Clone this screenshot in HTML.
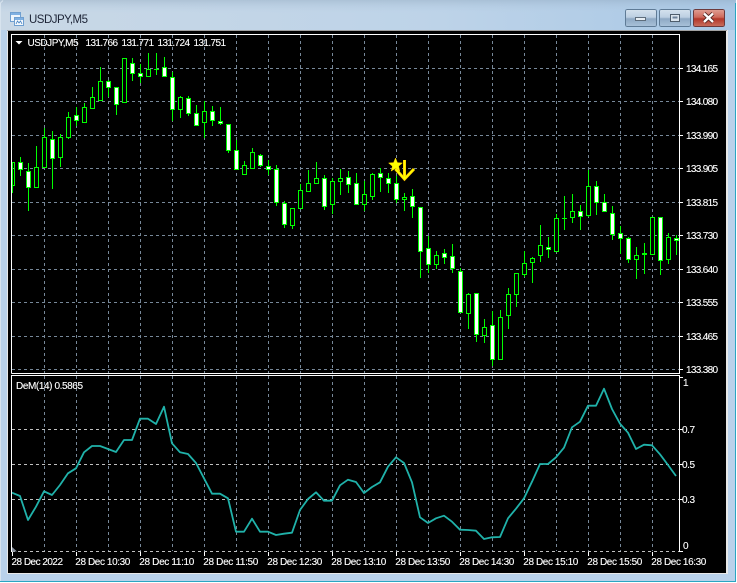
<!DOCTYPE html>
<html><head><meta charset="utf-8"><title>USDJPY,M5</title>
<style>
html,body{margin:0;padding:0;background:#fff}
body{width:737px;height:583px;overflow:hidden;position:relative}
svg{position:absolute;left:0;top:0;display:block}
text{font-family:"Liberation Sans",sans-serif;font-size:10px;fill:#fff;stroke:#fff;stroke-width:.12}
</style></head><body>
<svg width="737" height="583" viewBox="0 0 737 583" xmlns="http://www.w3.org/2000/svg">
<defs>
<linearGradient id="tb" x1="0" y1="0" x2="1" y2="0"><stop offset="0" stop-color="#c9d8e6"/><stop offset=".6" stop-color="#bdd3e8"/><stop offset="1" stop-color="#a9c8e6"/></linearGradient>
<linearGradient id="tv" x1="0" y1="0" x2="0" y2="1"><stop offset="0" stop-color="#8ea6bc" stop-opacity=".4"/><stop offset=".45" stop-color="#b9d1ea" stop-opacity="0"/></linearGradient>
<linearGradient id="bb" x1="0" y1="0" x2="0" y2="1"><stop offset="0" stop-color="#d5e2ee"/><stop offset=".45" stop-color="#bccfe2"/><stop offset=".55" stop-color="#8fa9c4"/><stop offset="1" stop-color="#a9c2da"/></linearGradient>
<linearGradient id="bc" x1="0" y1="0" x2="0" y2="1"><stop offset="0" stop-color="#e0a094"/><stop offset=".45" stop-color="#cf6a5c"/><stop offset=".55" stop-color="#b3372a"/><stop offset="1" stop-color="#c9705f"/></linearGradient>
</defs>
<!-- window frame -->
<path d="M3 0H733L736 3V581H0V3Z" fill="#b9d1ea"/>
<rect x="0" y="0" width="736" height="30" fill="url(#tb)"/>
<rect x="0" y="0" width="736" height="30" fill="url(#tv)"/>
<path d="M0.5 581V3L3 .5" fill="none" stroke="#d7e3ee"/>
<rect x="0" y="581" width="736" height="1" fill="#2aa5c2"/>
<rect x="735" y="3" width="1" height="579" fill="#2aa5c2"/>
<rect x="7" y="30" width="721" height="544" fill="#e8e8e8"/>
<rect x="7" y="30" width="720" height="1" fill="#a0a0a0"/>
<rect x="8" y="31" width="718" height="542" fill="#000"/>
<!-- title icon -->
<g shape-rendering="crispEdges">
<rect x="10.5" y="12.5" width="10" height="9" fill="#eef5fc" stroke="#6f9fd0"/>
<rect x="11" y="13" width="9" height="2" fill="#7fb0e2"/>
<rect x="14.5" y="17.5" width="9" height="8" fill="#f5f9fd" stroke="#6f9fd0"/>
<rect x="15" y="18" width="8" height="2" fill="#7fb0e2"/>
</g>
<path d="M16 24l1.5-3 1.5 2 1.5-2 1.5 3" fill="none" stroke="#3f7fc0" stroke-width=".8"/>
<text x="29" y="23" textLength="59" lengthAdjust="spacing" style="font-size:11.5px;fill:#1d2436;stroke:none">USDJPY,M5</text>
<!-- buttons -->
<g shape-rendering="crispEdges">
<rect x="625.5" y="9.5" width="31" height="17" rx="2" fill="url(#bb)" stroke="#5f7b96"/>
<rect x="659.5" y="9.5" width="31" height="17" rx="2" fill="url(#bb)" stroke="#5f7b96"/>
<rect x="693.5" y="9.5" width="31" height="17" rx="2" fill="url(#bc)" stroke="#6d3a3c"/>
<rect x="635.5" y="17.5" width="10" height="3" fill="#e6edf3" stroke="#5e6d7c"/>
<rect x="670.5" y="14.5" width="9" height="7" fill="#dbe5ee" stroke="#4e5d6c"/>
<rect x="672.5" y="16.5" width="5" height="2" fill="#6c8199"/>
</g>
<path d="M704 13.5l9 8.5M713 13.5l-9 8.5" stroke="#4d2320" stroke-width="4" fill="none"/>
<path d="M704 13.5l9 8.5M713 13.5l-9 8.5" stroke="#fff" stroke-width="2.4" fill="none"/>
<!-- grid -->
<g shape-rendering="crispEdges" fill="none">
<path stroke="#778899" stroke-dasharray="3 3" d="M12 68.500H679M12 101.500H679M12 135.500H679M12 168.500H679M12 202.500H679M12 235.500H679M12 269.500H679M12 302.500H679M12 336.500H679M12 369.500H679"/>
<path stroke="#778899" stroke-dasharray="3 3" d="M44.500 35V373M76.500 35V373M108.500 35V373M140.500 35V373M172.500 35V373M204.500 35V373M236.500 35V373M268.500 35V373M300.500 35V373M332.500 35V373M364.500 35V373M396.500 35V373M428.500 35V373M460.500 35V373M492.500 35V373M524.500 35V373M556.500 35V373M588.500 35V373M620.500 35V373M652.500 35V373"/>
<path stroke="#778899" stroke-dasharray="3 3" d="M44.500 376V551M76.500 376V551M108.500 376V551M140.500 376V551M172.500 376V551M204.500 376V551M236.500 376V551M268.500 376V551M300.500 376V551M332.500 376V551M364.500 376V551M396.500 376V551M428.500 376V551M460.500 376V551M492.500 376V551M524.500 376V551M556.500 376V551M588.500 376V551M620.500 376V551M652.500 376V551"/>
<path stroke="#c0c0c0" stroke-dasharray="3 3" d="M12 429.500H679M12 464.500H679M12 499.500H679M12 551.500H679"/>
</g>
<!-- candle wicks -->
<g shape-rendering="crispEdges" fill="none" stroke="#00ff00">
<path d="M12.500 162V193M20.500 157V176M28.500 163V211M36.500 146V187M44.500 128V168M52.500 131V189M60.500 134V167M68.500 112V139M76.500 107V126M84.500 103V123M92.500 87V109M100.500 67V100M108.500 80V97M116.500 87V115M124.500 58V102M132.500 58V81M140.500 64V83M148.500 53V77M156.500 53V75M164.500 57V77M172.500 72V121M180.500 96V118M188.500 96V116M196.500 105V125M204.500 101V138M212.500 106V126M220.500 107V125M228.500 124V153M236.500 140V170M244.500 161V175M252.500 148V168M260.500 154V167M268.500 160V175M276.500 165V206M284.500 201V228M292.500 208V229M300.500 184V208M308.500 170V191M316.500 162V183M324.500 175V210M332.500 178V214M340.500 169V195M348.500 171V193M356.500 173V204M364.500 181V211M372.500 173V200M380.500 168V192M388.500 173V193M396.500 176V203M404.500 193V211M412.500 189V218M420.500 207V278M428.500 236V273M436.500 251V269M444.500 249V264M452.500 244V273M460.500 268V313M468.500 293V329M476.500 293V342M484.500 319V343M492.500 311V366M500.500 310V359M508.500 288V329M516.500 273V307M524.500 251V277M532.500 257V283M540.500 225V262M548.500 237V258M556.500 214V251M564.500 196V230M572.500 194V223M580.500 205V230M588.500 170V217M596.500 181V215M604.500 194V211M612.500 206V240M620.500 226V254M628.500 237V263M636.500 247V279M644.500 243V274M652.500 217V254M660.500 217V275M668.500 233V264M676.500 235V255"/>
<path d="M12 162.500H14.500V185.500H12M154 69.500h5M562 218.500h5M642 253.500h5M642 254.500h5"/>
<!-- hollow bodies -->
<path fill="#000" d="M34.500 167.500h4v20h-4zM42.500 137.500h4v30h-4zM58.500 137.500h4v20h-4zM66.500 117.500h4v20h-4zM82.500 107.500h4v15h-4zM90.500 97.500h4v11h-4zM98.500 81.500h4v19h-4zM122.500 58.500h4v44h-4zM146.500 69.500h4v7h-4zM178.500 97.500h4v12h-4zM202.500 111.500h4v11h-4zM242.500 165.500h4v9h-4zM250.500 152.500h4v16h-4zM290.500 208.500h4v17h-4zM298.500 190.500h4v18h-4zM306.500 183.500h4v8h-4zM314.500 178.500h4v5h-4zM330.500 181.500h4v23h-4zM338.500 178.500h4v3h-4zM362.500 194.500h4v10h-4zM370.500 174.500h4v22h-4zM402.500 197.500h4v2h-4zM434.500 255.500h4v9h-4zM466.500 294.500h4v19h-4zM482.500 327.500h4v8h-4zM498.500 317.500h4v42h-4zM506.500 294.500h4v21h-4zM514.500 273.500h4v21h-4zM522.500 263.500h4v11h-4zM530.500 258.500h4v4h-4zM538.500 245.500h4v10h-4zM554.500 218.500h4v33h-4zM570.500 211.500h4v6h-4zM586.500 186.500h4v29h-4zM634.500 255.500h4v4h-4zM650.500 217.500h4v37h-4zM666.500 237.500h4v22h-4z"/>
<!-- filled bodies -->
<path fill="#fff" d="M18.500 162.500h4v7h-4zM26.500 171.500h4v16h-4zM50.500 139.500h4v19h-4zM74.500 115.500h4v5h-4zM106.500 81.500h4v6h-4zM114.500 87.500h4v17h-4zM130.500 63.500h4v10h-4zM138.500 73.500h4v3h-4zM162.500 67.500h4v9h-4zM170.500 77.500h4v32h-4zM186.500 98.500h4v15h-4zM194.500 113.500h4v12h-4zM210.500 111.500h4v9h-4zM218.500 121.500h4v2h-4zM226.500 124.500h4v26h-4zM234.500 150.500h4v19h-4zM258.500 155.500h4v10h-4zM266.500 166.500h4v3h-4zM274.500 169.500h4v33h-4zM282.500 203.500h4v21h-4zM322.500 178.500h4v28h-4zM346.500 177.500h4v7h-4zM354.500 183.500h4v21h-4zM378.500 173.500h4v4h-4zM386.500 178.500h4v5h-4zM394.500 183.500h4v16h-4zM410.500 196.500h4v10h-4zM418.500 207.500h4v44h-4zM426.500 248.500h4v16h-4zM442.500 253.500h4v4h-4zM450.500 256.500h4v12h-4zM458.500 271.500h4v41h-4zM474.500 293.500h4v41h-4zM490.500 325.500h4v34h-4zM546.500 247.500h4v2h-4zM578.500 211.500h4v5h-4zM594.500 186.500h4v16h-4zM602.500 202.500h4v9h-4zM610.500 213.500h4v21h-4zM618.500 233.500h4v5h-4zM626.500 238.500h4v21h-4zM658.500 217.500h4v43h-4zM674.500 238.500h4v2h-4z"/>
</g>
<!-- signal: star and arrow -->
<path d="M395.500 158l1.900 4.600 5 .4-3.800 3.200 1.200 4.900-4.300-2.700-4.300 2.700 1.200-4.900-3.800-3.200 5-.4z" fill="#ffff00" stroke="#ffd000" stroke-width=".5"/>
<path d="M404.500 160V179M395.500 169l9 10 9.500-10" fill="none" stroke="#ffc800" stroke-width="3"/>
<path d="M404.500 160V179M395.500 169l9 10 9.500-10" fill="none" stroke="#ffff00" stroke-width="1.600"/>
<!-- DeM line -->
<path fill="none" stroke="#20b2aa" stroke-width="1.800" stroke-linejoin="round" d="M12 492.700L20 496L28 520L36 506.700L44 491.300L52 495L60 485L68 473.300L76 468.300L84 452.300L92 446L100 446L108 449L116 452L124 440L132 440L140 418.700L148 418.700L156 424L164 406.700L172 443.300L180 452.300L188 454L196 463L204 478.300L212 493.700L220 493.700L228 498.300L236 531.700L244 531.700L252 518.700L260 531.700L268 531.700L276 535L284 533.700L292 532.700L300 510L308 499L316 492.300L324 500.700L332 500.700L340 485.300L348 479.700L356 482L364 493L372 487L380 482.300L388 466.700L396 457.300L404 463L412 482.300L420 517.300L428 523L436 518.300L444 515.700L452 521.700L460 529.700L468 530L476 530.700L484 539L492 537.300L500 537L508 518.300L516 508.700L524 498.300L532 481.700L540 464L548 464L556 457.300L564 447.700L572 427.300L580 421.700L588 405.700L596 405.700L604 388.700L612 409L620 423.700L628 432.700L636 449L644 444.700L652 445.300L660 454.300L668 465L676 476"/>
<path d="M12 547l5 4.500h-5z" fill="#8a93a0"/>
<!-- frames and ticks -->
<g shape-rendering="crispEdges" fill="none" stroke="#fff">
<path d="M11.500 373.500V34.500H679.500V373.500H11.500"/>
<path d="M11.500 552V375.500H679.500V552"/>
<path d="M680 68.500h3M680 101.500h3M680 135.500h3M680 168.500h3M680 202.500h3M680 235.500h3M680 269.500h3M680 302.500h3M680 336.500h3M680 369.500h3M680 377.500h3M680 429.500h3M680 464.500h3M680 499.500h3M680 551.500h3"/>
<path d="M12.500 552v4M76.500 552v4M140.500 552v4M204.500 552v4M268.500 552v4M332.500 552v4M396.500 552v4M460.500 552v4M524.500 552v4M588.500 552v4M652.500 552v4"/>
</g>
<path d="M15.500 41h7l-3.500 3.500z" fill="#fff"/>
<!-- top labels -->
<text x="27.500" y="46" textLength="51" lengthAdjust="spacing">USDJPY,M5</text>
<text x="85.500" y="46" textLength="32.500" lengthAdjust="spacing">131.766</text>
<text x="121.500" y="46" textLength="32.500" lengthAdjust="spacing">131.771</text>
<text x="157.500" y="46" textLength="32.500" lengthAdjust="spacing">131.724</text>
<text x="193.500" y="46" textLength="32.500" lengthAdjust="spacing">131.751</text>
<text x="16" y="389" textLength="67" lengthAdjust="spacing">DeM(14) 0.5865</text>
<!-- price labels -->
<text x="686" y="72" textLength="32" lengthAdjust="spacing">134.165</text>
<text x="686" y="105" textLength="32" lengthAdjust="spacing">134.080</text>
<text x="686" y="139" textLength="32" lengthAdjust="spacing">133.990</text>
<text x="686" y="172" textLength="32" lengthAdjust="spacing">133.905</text>
<text x="686" y="206" textLength="32" lengthAdjust="spacing">133.815</text>
<text x="686" y="239" textLength="32" lengthAdjust="spacing">133.730</text>
<text x="686" y="273" textLength="32" lengthAdjust="spacing">133.640</text>
<text x="686" y="306" textLength="32" lengthAdjust="spacing">133.555</text>
<text x="686" y="340" textLength="32" lengthAdjust="spacing">133.465</text>
<text x="686" y="373" textLength="32" lengthAdjust="spacing">133.380</text>
<!-- indicator labels -->
<text x="683" y="386">1</text>
<text x="682" y="433" textLength="13" lengthAdjust="spacing">0.7</text>
<text x="682" y="468" textLength="13" lengthAdjust="spacing">0.5</text>
<text x="682" y="503" textLength="13" lengthAdjust="spacing">0.3</text>
<text x="683" y="549">0</text>
<!-- time labels -->
<text x="11.500" y="565" textLength="51.500" lengthAdjust="spacing">28 Dec 2022</text>
<text x="75.300" y="565" textLength="55" lengthAdjust="spacing">28 Dec 10:30</text>
<text x="139.300" y="565" textLength="55" lengthAdjust="spacing">28 Dec 11:10</text>
<text x="203.300" y="565" textLength="55" lengthAdjust="spacing">28 Dec 11:50</text>
<text x="267.300" y="565" textLength="55" lengthAdjust="spacing">28 Dec 12:30</text>
<text x="331.300" y="565" textLength="55" lengthAdjust="spacing">28 Dec 13:10</text>
<text x="395.300" y="565" textLength="55" lengthAdjust="spacing">28 Dec 13:50</text>
<text x="459.300" y="565" textLength="55" lengthAdjust="spacing">28 Dec 14:30</text>
<text x="523.300" y="565" textLength="55" lengthAdjust="spacing">28 Dec 15:10</text>
<text x="587.300" y="565" textLength="55" lengthAdjust="spacing">28 Dec 15:50</text>
<text x="651.300" y="565" textLength="55" lengthAdjust="spacing">28 Dec 16:30</text>
</svg>
</body></html>
